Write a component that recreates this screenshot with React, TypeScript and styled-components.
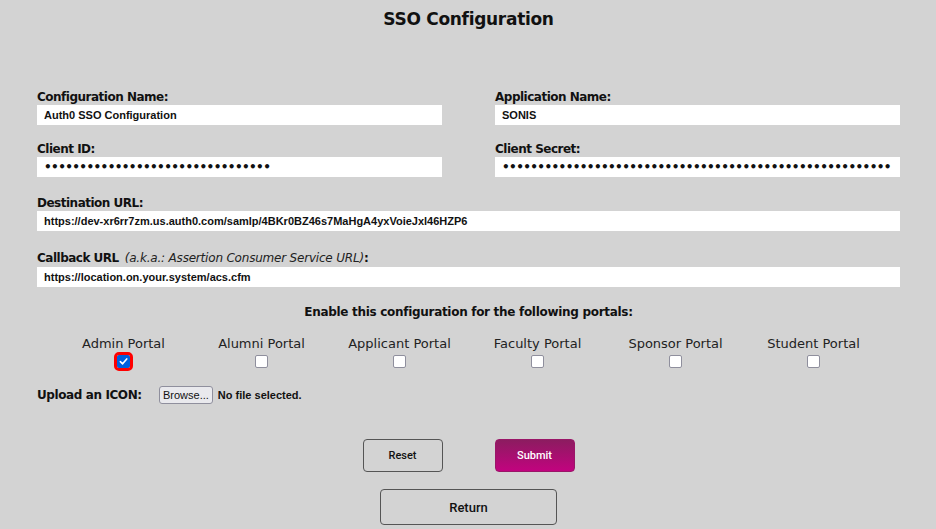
import styled, { createGlobalStyle } from "styled-components";

const GlobalStyle = createGlobalStyle`
  html, body {
    margin: 0;
    padding: 0;
    background: #d3d3d3;
  }
  * {
    box-sizing: border-box;
  }
`;

const Page = styled.div`
  width: 936px;
  min-height: 529px;
  padding: 0 36px 0 37px;
  font-family: "DejaVu Sans", sans-serif;
  color: #111;
`;

const Title = styled.h1`
  margin: 0;
  padding-top: 7px;
  height: 89px;
  text-align: center;
  font-size: 17px;
  font-weight: bold;
  line-height: 24px;
  letter-spacing: -0.3px;
`;

const FieldGrid = styled.div`
  display: grid;
  grid-template-columns: 1fr 1fr;
  column-gap: 53px;
  row-gap: 16px;
`;

const Field = styled.div<{ $wide?: boolean }>`
  display: flex;
  flex-direction: column;
  grid-column: ${(p) => (p.$wide ? "1 / span 2" : "auto")};
  margin-top: ${(p) => (p.$wide ? "2px" : "0")};
`;

const Label = styled.label<{ $tall?: boolean }>`
  font-size: 12px;
  font-weight: bold;
  line-height: ${(p) => (p.$tall ? "18px" : "16px")};
  height: ${(p) => (p.$tall ? "18px" : "16px")};
  letter-spacing: -0.5px;
`;

const Note = styled.span`
  font-style: italic;
  font-weight: normal;
  margin-left: 6px;
  letter-spacing: -0.2px;
  color: #222;
`;

const TextInput = styled.input<{ $masked?: boolean }>`
  height: 20px;
  border: none;
  outline: none;
  background: #fff;
  padding: 0 7px;
  font-family: ${(p) =>
    p.$masked ? '"DejaVu Sans", sans-serif' : '"Liberation Sans", Arial, sans-serif'};
  font-size: ${(p) => (p.$masked ? "12px" : "11px")};
  letter-spacing: ${(p) => (p.$masked ? "-0.6px" : "0")};
  font-weight: bold;
  color: #111;
`;

const PortalHeading = styled.div`
  margin-top: 17px;
  text-align: center;
  font-size: 12px;
  font-weight: bold;
  line-height: 16px;
  letter-spacing: -0.3px;
`;

const PortalRow = styled.div`
  display: grid;
  grid-template-columns: repeat(6, 138px);
  justify-content: center;
  margin-top: 16px;
`;

const Portal = styled.div`
  display: flex;
  flex-direction: column;
  align-items: center;
  font-size: 13px;
  line-height: 16px;
  color: #222;
`;

const Check = styled.span<{ $checked?: boolean; $flagged?: boolean }>`
  margin-top: 3px;
  width: 13px;
  height: 13px;
  border-radius: 2px;
  border: 1px solid ${(p) => (p.$checked ? "#0060df" : "#8f8f9d")};
  background: ${(p) => (p.$checked ? "#0060df" : "#fff")};
  outline: ${(p) => (p.$flagged ? "3px solid #ff0000" : "none")};
  outline-offset: 0;
  display: flex;
  align-items: center;
  justify-content: center;
`;

const UploadRow = styled.div`
  display: flex;
  align-items: center;
  margin-top: 17px;
  height: 20px;
`;

const UploadLabel = styled.span`
  font-size: 12px;
  font-weight: bold;
  letter-spacing: -0.4px;
  width: 122px;
`;

const BrowseButton = styled.button`
  height: 18px;
  padding: 0 3px;
  border: 1px solid #8f8f9d;
  border-radius: 3px;
  background: #e9e9ed;
  font-family: "Liberation Sans", Arial, sans-serif;
  font-size: 11px;
  color: #111;
`;

const FileName = styled.span`
  margin-left: 5px;
  font-family: "Liberation Sans", Arial, sans-serif;
  font-size: 11px;
  font-weight: bold;
`;

const ButtonRow = styled.div`
  display: flex;
  justify-content: center;
  gap: 52px;
  margin-top: 34px;
`;

const ActionButton = styled.button<{ $primary?: boolean }>`
  width: 80px;
  height: 33px;
  border-radius: 4px;
  border: 1px solid ${(p) => (p.$primary ? "#9a1668" : "#555")};
  background: ${(p) =>
    p.$primary ? "linear-gradient(#8c1c60, #c2037f)" : "transparent"};
  color: ${(p) => (p.$primary ? "#fff" : "#111")};
  font-family: Roboto, "Liberation Sans", sans-serif;
  font-size: 11px;
  font-weight: 500;
`;

const ReturnRow = styled.div`
  display: flex;
  justify-content: center;
  margin-top: 17px;
`;

const ReturnButton = styled.button`
  width: 177px;
  height: 36px;
  border-radius: 4px;
  border: 1px solid #555;
  background: transparent;
  font-family: Roboto, "Liberation Sans", sans-serif;
  font-size: 13px;
  font-weight: 500;
  color: #111;
`;

const portals = [
  { name: "Admin Portal", checked: true },
  { name: "Alumni Portal", checked: false },
  { name: "Applicant Portal", checked: false },
  { name: "Faculty Portal", checked: false },
  { name: "Sponsor Portal", checked: false },
  { name: "Student Portal", checked: false },
];

const mask = (n: number) => "\u2022".repeat(n);

export default function App() {
  return (
    <>
      <GlobalStyle />
      <Page>
        <Title>SSO Configuration</Title>
        <FieldGrid>
          <Field>
            <Label>Configuration Name:</Label>
            <TextInput defaultValue="Auth0 SSO Configuration" />
          </Field>
          <Field>
            <Label>Application Name:</Label>
            <TextInput defaultValue="SONIS" />
          </Field>
          <Field>
            <Label>Client ID:</Label>
            <TextInput $masked readOnly value={mask(32)} />
          </Field>
          <Field>
            <Label>Client Secret:</Label>
            <TextInput $masked readOnly value={mask(55)} />
          </Field>
          <Field $wide>
            <Label>Destination URL:</Label>
            <TextInput defaultValue="https://dev-xr6rr7zm.us.auth0.com/samlp/4BKr0BZ46s7MaHgA4yxVoieJxl46HZP6" />
          </Field>
          <Field $wide>
            <Label $tall>
              Callback URL<Note>(a.k.a.: Assertion Consumer Service URL)</Note>:
            </Label>
            <TextInput defaultValue="https://location.on.your.system/acs.cfm" />
          </Field>
        </FieldGrid>

        <PortalHeading>Enable this configuration for the following portals:</PortalHeading>
        <PortalRow>
          {portals.map((p) => (
            <Portal key={p.name}>
              {p.name}
              <Check $checked={p.checked} $flagged={p.checked}>
                {p.checked && (
                  <svg width="9" height="9" viewBox="0 0 10 10">
                    <path d="M1.5 5.2 L4 7.6 L8.6 2.2" fill="none" stroke="#fff" strokeWidth="1.8" strokeLinecap="round" strokeLinejoin="round" />
                  </svg>
                )}
              </Check>
            </Portal>
          ))}
        </PortalRow>

        <UploadRow>
          <UploadLabel>Upload an ICON:</UploadLabel>
          <BrowseButton>Browse...</BrowseButton>
          <FileName>No file selected.</FileName>
        </UploadRow>

        <ButtonRow>
          <ActionButton>Reset</ActionButton>
          <ActionButton $primary>Submit</ActionButton>
        </ButtonRow>
        <ReturnRow>
          <ReturnButton>Return</ReturnButton>
        </ReturnRow>
      </Page>
    </>
  );
}
